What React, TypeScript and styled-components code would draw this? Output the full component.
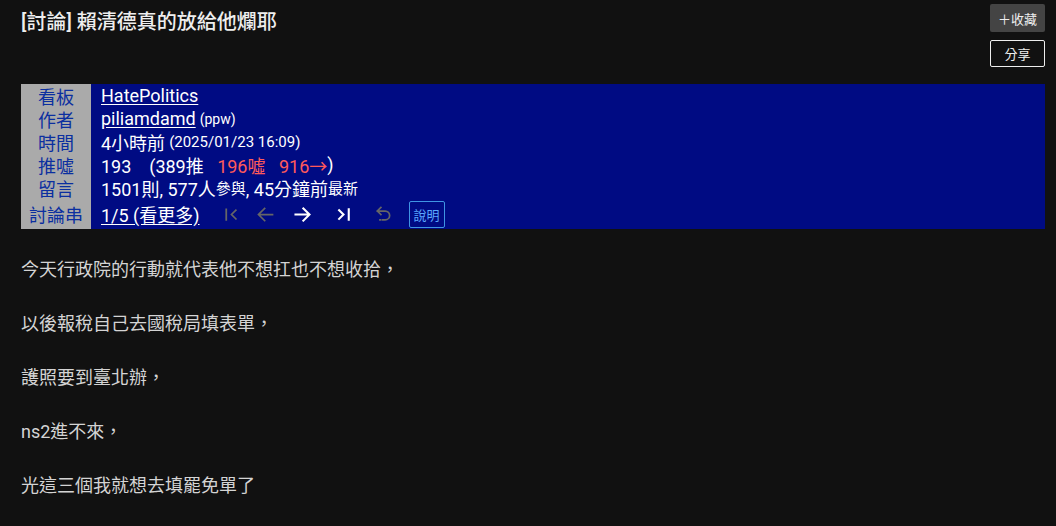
import { createGlobalStyle } from 'styled-components'
import styled from 'styled-components'

const GlobalStyle = createGlobalStyle`
  html, body {
    margin: 0;
    padding: 0;
    background: #111111;
    font-family: Roboto, "Noto Sans CJK TC", sans-serif;
  }
`

const Page = styled.div`
  padding: 4px 11px 0 21px;
  color: #dddddd;
`

const Header = styled.div`
  display: flex;
  justify-content: space-between;
  align-items: flex-start;
`

const Title = styled.h1`
  margin: 6px 0 0;
  font-size: 20px;
  font-weight: 500;
  line-height: 24px;
  color: #eeeeee;
`

const Actions = styled.div`
  display: flex;
  flex-direction: column;
  gap: 8px;
`

const ActionButton = styled.button<{ $outline?: boolean }>`
  width: 55px;
  height: ${(p) => (p.$outline ? '27px' : '28px')};
  padding: 0;
  border-radius: 2px;
  font-family: Roboto, "Noto Sans CJK TC", sans-serif;
  font-size: 13px;
  color: #eeeeee;
  background: ${(p) => (p.$outline ? 'transparent' : '#444444')};
  border: ${(p) => (p.$outline ? '1px solid #eeeeee' : 'none')};
`

const InfoTable = styled.div`
  margin-top: 17px;
  display: grid;
  grid-template-columns: 70px 1fr;
  grid-template-rows: repeat(5, 23px) 30px;
  background: #000b83;
`

const Label = styled.div`
  background: #aaaaaa;
  color: #0b2fa0;
  font-size: 18px;
  display: flex;
  align-items: center;
  justify-content: center;
`

const Value = styled.div`
  padding-left: 10px;
  display: flex;
  align-items: center;
  color: #ffffff;
  font-size: 18px;
  white-space: pre;
`

const Link = styled.a`
  color: #ffffff;
  text-decoration: underline;
  text-underline-offset: 2px;
`

const Small = styled.span<{ $size?: number }>`
  font-size: ${(p) => p.$size ?? 14}px;
  margin-left: 4px;
`

const Tight = styled.span`
  font-size: 15px;
`

const Red = styled.span`
  color: #ff5a5a;
`

const Nav = styled.div`
  display: flex;
  align-items: center;
  margin-left: 15px;
`

const NavIcon = styled.span<{ $active?: boolean; $w: number }>`
  width: ${(p) => p.$w}px;
  display: flex;
  justify-content: center;
  color: ${(p) => (p.$active ? '#ffffff' : '#666666')};
`

const HelpButton = styled.span`
  margin-left: 6px;
  height: 25px;
  padding: 0 4px;
  border: 1px solid #3f94e4;
  border-radius: 2px;
  color: #5aa8ff;
  font-size: 13px;
  display: flex;
  align-items: center;
`

const Body = styled.div`
  margin-top: 27px;
  font-size: 18px;
  line-height: 27px;
  color: #d4d4d4;
`

const Para = styled.p`
  margin: 0 0 27px;
`

const Icon = ({ d, w = 2 }: { d: string; w?: number }) => (
  <svg width="21" height="21" viewBox="0 0 24 24" fill="none" stroke="currentColor" strokeWidth={w} strokeLinecap="square">
    <path d={d} />
  </svg>
)

export default function App() {
  return (
    <>
      <GlobalStyle />
      <Page>
        <Header>
          <Title>[討論] 賴清德真的放給他爛耶</Title>
          <Actions>
            <ActionButton>＋收藏</ActionButton>
            <ActionButton $outline>分享</ActionButton>
          </Actions>
        </Header>
        <InfoTable>
          <Label>看板</Label>
          <Value>
            <Link>HatePolitics</Link>
          </Value>
          <Label>作者</Label>
          <Value>
            <Link>piliamdamd</Link>
            <Small>(ppw)</Small>
          </Value>
          <Label>時間</Label>
          <Value>
            4小時前<Small $size={15}>(2025/01/23 16:09)</Small>
          </Value>
          <Label>推噓</Label>
          <Value>
            193{'    '}(389推{'   '}<Red>196噓{'   '}916→</Red>)
          </Value>
          <Label>留言</Label>
          <Value>
            1501則, 577人<Tight>參與</Tight>, 45分鐘前<Tight>最新</Tight>
          </Value>
          <Label>討論串</Label>
          <Value>
            <Link>1/5 (看更多)</Link>
            <Nav>
              <NavIcon $w={33}>
                <Icon d="M6 6v12M17 7l-5 5 5 5" />
              </NavIcon>
              <NavIcon $w={35}>
                <Icon d="M20 12H5M11 5l-7 7 7 7" />
              </NavIcon>
              <NavIcon $active $w={40}>
                <Icon d="M4 12h15M13 5l7 7-7 7" w={2.4} />
              </NavIcon>
              <NavIcon $active $w={42}>
                <Icon d="M7 7l5 5-5 5M18 6v12" w={2.4} />
              </NavIcon>
              <NavIcon $w={38}>
                <Icon d="M9 4L5 8l4 4M5 8h9a5 5 0 0 1 0 10h-3M8 18h0.5" />
              </NavIcon>
              <HelpButton>說明</HelpButton>
            </Nav>
          </Value>
        </InfoTable>
        <Body>
          <Para>今天行政院的行動就代表他不想扛也不想收拾，</Para>
          <Para>以後報稅自己去國稅局填表單，</Para>
          <Para>護照要到臺北辦，</Para>
          <Para>ns2進不來，</Para>
          <Para>光這三個我就想去填罷免單了</Para>
        </Body>
      </Page>
    </>
  )
}
